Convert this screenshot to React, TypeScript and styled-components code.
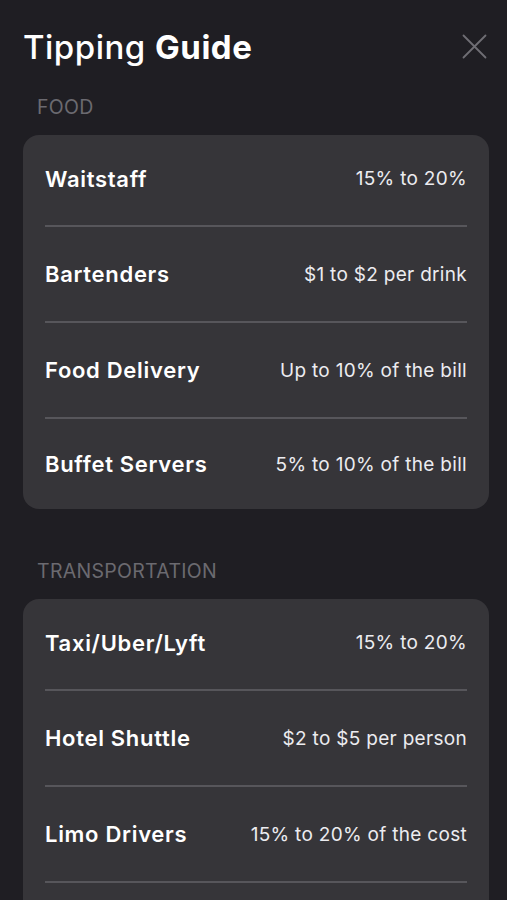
import React from "react";
import styled, { createGlobalStyle } from "styled-components";

const GlobalStyle = createGlobalStyle`
  html, body {
    margin: 0;
    padding: 0;
    background: #1f1e23;
  }
  body {
    font-family: Inter, "Open Sans", Roboto, sans-serif;
    -webkit-font-smoothing: antialiased;
  }
`;

const Page = styled.div`
  width: 507px;
  height: 900px;
  overflow: hidden;
  background: #1f1e23;
  padding: 0 20px 0 23px;
  box-sizing: border-box;
`;

const Header = styled.header`
  display: flex;
  justify-content: space-between;
  align-items: center;
  height: 93px;
`;

const Title = styled.h1`
  margin: 0;
  font-size: 33px;
  font-weight: 500;
  color: #ffffff;
  letter-spacing: 0.5px;

  b {
    font-weight: 700;
  }
`;

const CloseButton = styled.button`
  background: none;
  border: none;
  padding: 0;
  width: 25px;
  height: 25px;
  display: flex;
  align-items: center;
  justify-content: center;
  cursor: pointer;
`;

const SectionLabel = styled.div`
  padding-left: 14px;
  font-size: 19.5px;
  color: #6b6a70;
  letter-spacing: 0.3px;
  height: 28px;
  display: flex;
  align-items: center;
  margin-bottom: 14px;
`;

const Section = styled.section`
  margin-bottom: 48px;
`;

const Card = styled.div`
  width: 466px;
  background: #363539;
  border-radius: 16px;
  overflow: hidden;
`;

const Row = styled.div`
  display: flex;
  justify-content: space-between;
  align-items: center;
  height: 94px;
  padding: 0 22px;

  &:first-child {
    height: 90px;
    padding-bottom: 3px;
    box-sizing: border-box;
  }
  &:last-child {
    height: 90px;
  }
`;

const Divider = styled.div`
  height: 2px;
  margin: 0 22px;
  background: #57565b;
`;

const Name = styled.span`
  font-size: 22px;
  font-weight: 600;
  color: #ffffff;
  letter-spacing: 0.7px;
`;

const Value = styled.span`
  font-size: 19px;
  font-weight: 400;
  color: #ececf0;
  letter-spacing: 0.3px;
`;

type Item = { name: string; value: string };

// `more` marks a list that keeps going below the fold
const sections: { title: string; items: Item[]; more?: boolean }[] = [
  {
    title: "FOOD",
    items: [
      { name: "Waitstaff", value: "15% to 20%" },
      { name: "Bartenders", value: "$1 to $2 per drink" },
      { name: "Food Delivery", value: "Up to 10% of the bill" },
      { name: "Buffet Servers", value: "5% to 10% of the bill" },
    ],
  },
  {
    title: "TRANSPORTATION",
    items: [
      { name: "Taxi/Uber/Lyft", value: "15% to 20%" },
      { name: "Hotel Shuttle", value: "$2 to $5 per person" },
      { name: "Limo Drivers", value: "15% to 20% of the cost" },
    ],
    more: true,
  },
];

function CloseIcon() {
  return (
    <svg width="25" height="25" viewBox="0 0 25 25">
      <path
        d="M1.5 1.5 L23.5 23.5 M23.5 1.5 L1.5 23.5"
        stroke="#6f6e74"
        strokeWidth="1.8"
        strokeLinecap="round"
      />
    </svg>
  );
}

export default function App() {
  return (
    <>
      <GlobalStyle />
      <Page>
        <Header>
          <Title>
            Tipping <b>Guide</b>
          </Title>
          <CloseButton aria-label="Close">
            <CloseIcon />
          </CloseButton>
        </Header>
        {sections.map((section) => (
          <Section key={section.title}>
            <SectionLabel>{section.title}</SectionLabel>
            <Card>
              {section.items.map((item, i) => (
                <React.Fragment key={item.name}>
                  {i > 0 && <Divider />}
                  <Row>
                    <Name>{item.name}</Name>
                    <Value>{item.value}</Value>
                  </Row>
                </React.Fragment>
              ))}
              {section.more && (
                <>
                  <Divider />
                  <Row />
                </>
              )}
            </Card>
          </Section>
        ))}
      </Page>
    </>
  );
}
